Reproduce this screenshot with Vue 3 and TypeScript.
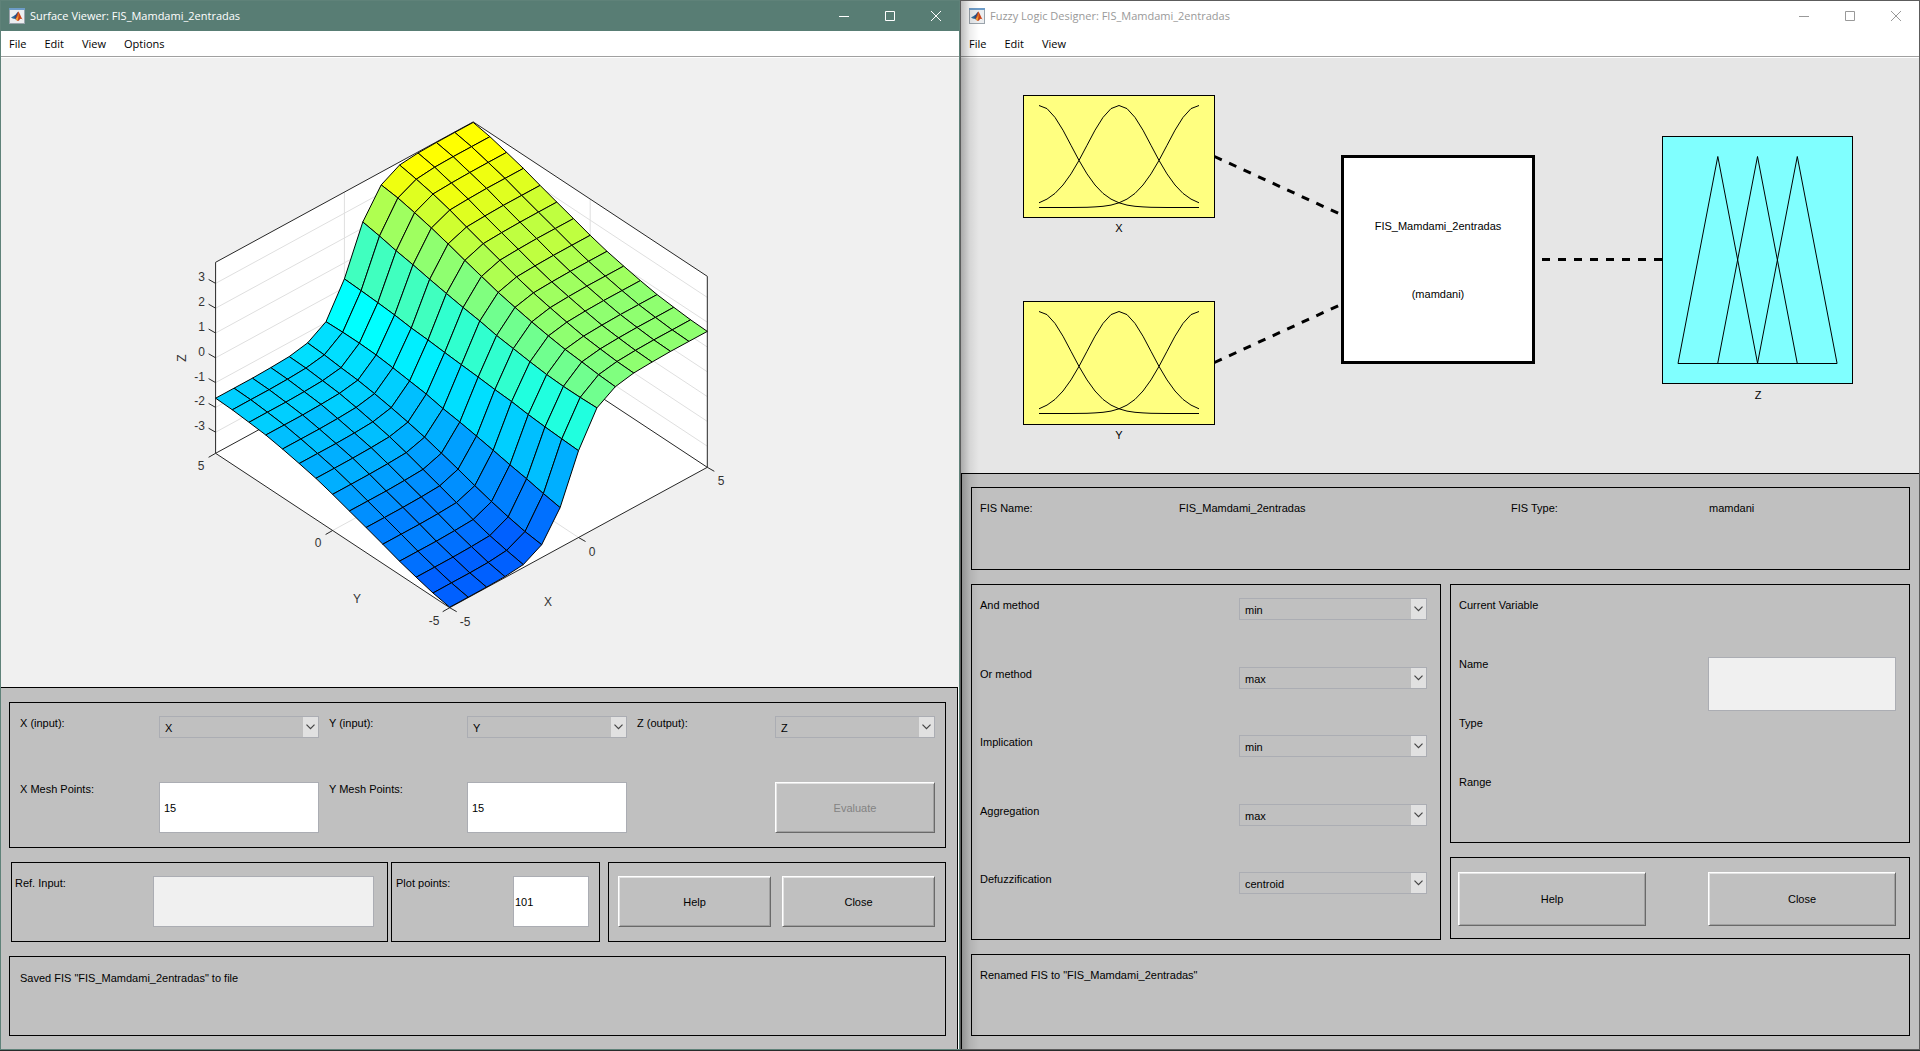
<script setup lang="ts">
import { ref } from 'vue'

type Point = [number, number]

interface Face {
  points: string
  fill: string
}

interface Method {
  id: string
  label: string
  value: string
  options: string[]
}

const fisName = 'FIS_Mamdami_2entradas'

/* ---- Surface plot ---- */

const LAST = 14
const Z_MAX = 3.85

// Heights for x index 7..14, each listed from y = 5 down to y = -5.
const edge = [3.83, 3.7, 3.51, 3.31, 3.07, 2.84, 2.62, 2.39, 2.19, 2.04, 1.9, 1.78, 1.71, 1.65, 1.63]
const heights: Record<number, number[]> = {
  7: [0.35, 0.32, 0.28, 0.23, 0.15, 0.11, 0.05, 0, -0.05, -0.11, -0.15, -0.23, -0.28, -0.32, -0.35],
  8: [2.24, 2.12, 1.97, 1.85, 1.71, 1.58, 1.46, 1.36, 1.22, 1.14, 1.05, 0.98, 0.95, 0.95, 0.97],
  9: [3.33, 3.25, 3.1, 2.93, 2.73, 2.51, 2.31, 2.11, 1.95, 1.81, 1.69, 1.59, 1.53, 1.46, 1.42],
  10: edge.map((z, k) => z - (k < 2 ? 0.1 : 0.06)),
  11: edge.map((z) => z - 0.02),
  12: edge,
  13: edge,
  14: edge,
}

// The rule base is odd about the origin, so the low-x half is the mirrored high-x half.
function height(i: number, k: number): number {
  return i >= 7 ? heights[i][k] : -heights[LAST - i][LAST - k]
}

// i runs along X from -5 to 5, k runs along Y from 5 to -5.
function project(i: number, k: number, z: number): Point {
  return [215.6 + 18.4 * i + 16.72 * k, 357.8 - 10.03 * i + 11.03 * k - 24.8 * z]
}

function path(points: Point[]): string {
  return points.map((p) => p.map((v) => v.toFixed(1)).join(',')).join(' ')
}

function faceColor(z: number): string {
  const t = Math.round((z + 0.9) * 0.22 * 16) / 16
  if (t < 0) return `rgb(0,${Math.round(255 * (1 + t))},255)`
  const r = Math.min(255, Math.round(255 * t))
  return `rgb(${r},255,${255 - r})`
}

const faces: Face[] = []
for (let i = LAST - 1; i >= 0; i--) {
  for (let k = 0; k < LAST; k++) {
    faces.push({
      points: path([
        project(i, k, height(i, k)),
        project(i + 1, k, height(i + 1, k)),
        project(i + 1, k + 1, height(i + 1, k + 1)),
        project(i, k + 1, height(i, k + 1)),
      ]),
      fill: faceColor(height(i, k + 1)),
    })
  }
}

const corner = (i: number, k: number, z: number): Point => project(i * LAST, k * LAST, z * Z_MAX)

const hull = path([
  corner(0, 0, 1), corner(1, 0, 1), corner(1, 1, 1),
  corner(1, 1, -1), corner(0, 1, -1), corner(0, 0, -1),
])

const zTicks = [3, 2, 1, 0, -1, -2, -3]
const gridLines = [
  ...zTicks.map((z) => path([project(0, 0, z), project(LAST, 0, z), project(LAST, LAST, z)])),
  path([project(7, 0, Z_MAX), project(7, 0, -Z_MAX), project(7, LAST, -Z_MAX)]),
  path([project(LAST, 7, Z_MAX), project(LAST, 7, -Z_MAX), project(0, 7, -Z_MAX)]),
]
const backEdges = path([corner(0, 0, -1), corner(1, 0, -1), corner(1, 1, -1)])

function tick(from: Point, dx: number, dy: number): string {
  return path([from, [from[0] + dx, from[1] + dy]])
}
const tickLines = [
  ...zTicks.map((z) => tick(project(0, 0, z), -7, -4)),
  ...[0, 7, 14].map((k) => tick(project(0, k, -Z_MAX), -7, 4)),
  ...[0, 7, 14].map((i) => tick(project(i, LAST, -Z_MAX), 7, 4)),
]

const plotLabels = [
  ...zTicks.map((z) => ({ text: String(z), x: 205, y: Math.round(project(0, 0, z)[1]) - 2, anchor: 'end' })),
  { text: '5', x: 201, y: 470, anchor: 'middle' },
  { text: '0', x: 318, y: 547, anchor: 'middle' },
  { text: '-5', x: 434, y: 625, anchor: 'middle' },
  { text: '-5', x: 465, y: 626, anchor: 'middle' },
  { text: '0', x: 592, y: 556, anchor: 'middle' },
  { text: '5', x: 721, y: 485, anchor: 'middle' },
  { text: 'Y', x: 357, y: 603, anchor: 'middle' },
  { text: 'X', x: 548, y: 606, anchor: 'middle' },
]

/* ---- System diagram ---- */

function bell(center: number, top: number): string {
  const points: Point[] = []
  for (let n = 0; n <= 20; n++) {
    const d = n / 20 - center
    points.push([1039 + 8 * n, top + 112 - 102 * Math.exp(-12.35 * d * d)])
  }
  return path(points)
}

const inputs = [
  { name: 'X', top: 95.5, height: 122 },
  { name: 'Y', top: 301.5, height: 123 },
].map((box) => ({ ...box, curves: [0, 0.5, 1].map((c) => bell(c, box.top)) }))

const triangles = [1678, 1717.7, 1757.5].map((x) => `${x},363.5 ${x + 39.8},156.5 ${x + 79.6},363.5`)

/* ---- Form state ---- */

const xInput = ref('X')
const yInput = ref('Y')
const zOutput = ref('Z')
const xMesh = ref('15')
const yMesh = ref('15')
const refInput = ref('')
const plotPoints = ref('101')
const variableName = ref('')

const methods = ref<Method[]>([
  { id: 'and', label: 'And method', value: 'min', options: ['min', 'prod'] },
  { id: 'or', label: 'Or method', value: 'max', options: ['max', 'probor'] },
  { id: 'imp', label: 'Implication', value: 'min', options: ['min', 'prod'] },
  { id: 'agg', label: 'Aggregation', value: 'max', options: ['max', 'sum'] },
  { id: 'defuzz', label: 'Defuzzification', value: 'centroid', options: ['centroid', 'bisector'] },
])

const captions = ['Minimize', 'Maximize', 'Close']
const captionPaths = ['M0 5.5H10', 'M.5 .5H9.5V9.5H.5Z', 'M0 0L10 10M10 0L0 10']
</script>

<template>
  <div class="desktop">
    <svg class="defs" aria-hidden="true">
      <symbol id="app-icon" viewBox="0 0 16 16">
        <rect x=".5" y=".5" width="15" height="15" fill="#eceef0" stroke="#9aa3ab" />
        <rect width="16" height="2" fill="#6d9cc8" />
        <path d="M2 9.5L5.5 7.6L7.4 8.2L6 10.6L4.3 10.8Z" fill="#2f6f9f" />
        <path d="M5.5 7.6C7 7 8 4.5 9.2 3.6L9.4 8L7 11.6L5.4 10.8Z" fill="#274f86" />
        <path d="M9.2 3.6C10.6 4.5 11.6 9 13.8 11.6C12.2 10.4 11.2 10.6 10.2 12.2C9.4 13.2 8.6 13.2 8 12.6L6.6 10.6Z" fill="#c8431b" />
        <path d="M9.2 3.6C9.4 7 8.8 9.4 6.6 10.8L8.2 13C9.6 11 9.8 7 9.2 3.6Z" fill="#f2a13a" />
      </symbol>
      <symbol id="chevron" viewBox="0 0 9 6">
        <path d="M.5 .7L4.5 4.7L8.5 .7" fill="none" stroke="#444" stroke-width="1.2" />
      </symbol>
    </svg>

    <section class="window active">
      <header class="titlebar">
        <svg class="app-icon"><use href="#app-icon" /></svg>
        <h1>Surface Viewer: {{ fisName }}</h1>
        <button v-for="(name, n) in captions" :key="name" class="caption" :aria-label="name">
          <svg viewBox="0 0 10 10"><path :d="captionPaths[n]" /></svg>
        </button>
      </header>
      <nav class="menubar">
        <button v-for="item in ['File', 'Edit', 'View', 'Options']" :key="item">{{ item }}</button>
      </nav>

      <svg class="figure light" viewBox="1 58 958 629">
        <polygon :points="hull" fill="#fff" />
        <polyline v-for="line in gridLines" :key="line" :points="line" class="grid-line" />
        <polyline :points="backEdges" class="axis" />
        <polygon :points="hull" class="axis" />
        <polyline v-for="line in tickLines" :key="line" :points="line" class="axis" />
        <polygon v-for="face in faces" :key="face.points" :points="face.points" :fill="face.fill" class="face" />
        <text v-for="(label, n) in plotLabels" :key="n" :x="label.x" :y="label.y" :text-anchor="label.anchor" class="tick-label">{{ label.text }}</text>
        <text transform="translate(186 358) rotate(-90)" text-anchor="middle" class="tick-label">Z</text>
      </svg>

      <div class="controls surface-controls">
        <div class="box mesh">
          <label for="x-input">X (input):</label>
          <span class="combo">
            <select id="x-input" v-model="xInput"><option>X</option><option>Y</option></select>
            <svg><use href="#chevron" x="3" y="7" width="9" height="6" /></svg>
          </span>
          <label for="y-input" class="col-4">Y (input):</label>
          <span class="combo">
            <select id="y-input" v-model="yInput"><option>X</option><option>Y</option></select>
            <svg><use href="#chevron" x="3" y="7" width="9" height="6" /></svg>
          </span>
          <label for="z-output" class="col-7">Z (output):</label>
          <span class="combo">
            <select id="z-output" v-model="zOutput"><option>Z</option></select>
            <svg><use href="#chevron" x="3" y="7" width="9" height="6" /></svg>
          </span>
          <label for="x-mesh">X Mesh Points:</label>
          <input id="x-mesh" v-model="xMesh" type="text">
          <label for="y-mesh" class="col-4">Y Mesh Points:</label>
          <input id="y-mesh" v-model="yMesh" type="text">
          <button class="push col-8" disabled>Evaluate</button>
        </div>

        <div class="lower-row">
          <div class="box ref-box">
            <label for="ref-input">Ref. Input:</label>
            <input id="ref-input" v-model="refInput" type="text" disabled>
          </div>
          <div class="box points-box">
            <label for="plot-points">Plot points:</label>
            <input id="plot-points" v-model="plotPoints" type="text">
          </div>
          <div class="box buttons-box">
            <button class="push">Help</button>
            <button class="push">Close</button>
          </div>
        </div>

        <p class="box status">Saved FIS "{{ fisName }}" to file</p>
      </div>
    </section>

    <section class="window inactive">
      <header class="titlebar">
        <svg class="app-icon"><use href="#app-icon" /></svg>
        <h1>Fuzzy Logic Designer: {{ fisName }}</h1>
        <button v-for="(name, n) in captions" :key="name" class="caption" :aria-label="name">
          <svg viewBox="0 0 10 10"><path :d="captionPaths[n]" /></svg>
        </button>
      </header>
      <nav class="menubar">
        <button v-for="item in ['File', 'Edit', 'View']" :key="item">{{ item }}</button>
      </nav>

      <svg class="figure" viewBox="961 58 958 415">
        <g v-for="box in inputs" :key="box.name">
          <rect x="1023.5" :y="box.top" width="191" :height="box.height" fill="#ffff80" stroke="#000" />
          <polyline v-for="curve in box.curves" :key="curve" :points="curve" class="curve" />
          <text x="1119" :y="box.top + box.height + 14" class="node-label">{{ box.name }}</text>
        </g>
        <path d="M1214.5 156.5L1342 215M1214.5 362.5L1342 304M1542 259.5H1662" class="link" />
        <rect x="1342.5" y="156.5" width="191" height="206" fill="#fff" stroke="#000" stroke-width="3" />
        <text x="1438" y="230" class="node-label">{{ fisName }}</text>
        <text x="1438" y="298" class="node-label">(mamdani)</text>
        <rect x="1662.5" y="136.5" width="190" height="247" fill="#80ffff" stroke="#000" />
        <polyline v-for="t in triangles" :key="t" :points="t" class="curve" />
        <path d="M1678 363.5H1837" class="curve" />
        <text x="1758" y="399" class="node-label">Z</text>
      </svg>

      <div class="controls designer-controls">
        <dl class="box fis-info">
          <dt>FIS Name:</dt>
          <dd>{{ fisName }}</dd>
          <dt>FIS Type:</dt>
          <dd>mamdani</dd>
        </dl>
        <div class="columns">
          <div class="box methods">
            <div v-for="m in methods" :key="m.id" class="method">
              <label :for="m.id">{{ m.label }}</label>
              <span class="combo">
                <select :id="m.id" v-model="m.value"><option v-for="o in m.options" :key="o">{{ o }}</option></select>
                <svg><use href="#chevron" x="3" y="7" width="9" height="6" /></svg>
              </span>
            </div>
          </div>
          <div class="side">
            <div class="box variable">
              <h2>Current Variable</h2>
              <div class="variable-row">
                <label for="variable-name">Name</label>
                <input id="variable-name" v-model="variableName" type="text" disabled>
              </div>
              <div class="variable-row">Type</div>
              <div class="variable-row">Range</div>
            </div>
            <div class="box side-buttons">
              <button class="push">Help</button>
              <button class="push">Close</button>
            </div>
          </div>
        </div>
        <p class="box status">Renamed FIS to "{{ fisName }}"</p>
      </div>
    </section>
  </div>
</template>

<style>
body {
  margin: 0;
  background: #262c2b;
}
</style>

<style scoped>
* {
  box-sizing: border-box;
}

.desktop {
  display: grid;
  grid-template-columns: 1fr 1fr;
  min-height: 100vh;
  padding-bottom: 1px;
  color: #000;
  font: 11px/14px "Liberation Sans", Arial, sans-serif;
}

.defs {
  position: absolute;
  width: 0;
  height: 0;
}

.window {
  position: relative;
  display: flex;
  flex-direction: column;
  min-width: 0;
  border: 1px solid #5f8279;
  background: #fff;
}

.inactive {
  border-color: #5c5c5c;
}

.inactive::after {
  content: "";
  position: absolute;
  inset: 0 auto 0 0;
  width: 18px;
  background: linear-gradient(90deg, rgba(0, 0, 0, 0.26), rgba(0, 0, 0, 0.07) 50%, transparent);
  pointer-events: none;
}

.titlebar {
  display: flex;
  align-items: center;
  height: 30px;
  padding-left: 8px;
  color: #999;
}

.active .titlebar {
  background: #587d74;
  color: #fff;
}

.app-icon {
  width: 16px;
  height: 16px;
}

.titlebar h1 {
  flex: 1;
  margin: 0 0 0 5px;
  font: 11px/16px "Open Sans", "Noto Sans", sans-serif;
}

.caption {
  width: 46px;
  height: 30px;
  padding: 0;
  border: 0;
  background: none;
  color: inherit;
}

.caption svg {
  display: block;
  width: 10px;
  height: 10px;
  margin: 0 auto;
  fill: none;
  stroke: currentColor;
}

.menubar {
  display: flex;
  gap: 2px;
  height: 27px;
  border-bottom: 1px solid #fff;
  box-shadow: inset 0 -1px #a0a0a0;
}

.menubar button {
  height: 25px;
  padding: 0 8px;
  border: 0;
  background: none;
  color: #000;
  font: 11px/16px "Open Sans", "Noto Sans", sans-serif;
}

.figure {
  display: block;
  width: 100%;
  height: auto;
  background: #e6e6e6;
}

.figure.light {
  background: #f0f0f0;
}

.grid-line {
  fill: none;
  stroke: #dfdfdf;
}

.axis {
  fill: none;
  stroke: #262626;
}

.face {
  stroke: #000;
  stroke-linejoin: round;
}

.tick-label {
  fill: #333;
  font-size: 12px;
}

.curve {
  fill: none;
  stroke: #000;
}

.link {
  fill: none;
  stroke: #000;
  stroke-width: 3;
  stroke-dasharray: 8 8;
}

.node-label {
  text-anchor: middle;
}

.controls {
  display: flex;
  flex: 1;
  flex-direction: column;
  gap: 14px;
  border-top: 1px solid #000;
  background: #c0c0c0;
}

.surface-controls {
  margin-right: 1px;
  padding: 14px 11px 13px 8px;
  border-right: 1px solid #000;
}

.designer-controls {
  padding: 13px 9px 13px 9px;
  border-left: 1px solid #000;
}

.box {
  min-width: 0;
  margin: 0;
  border: 1px solid #000;
}

.mesh {
  display: grid;
  grid-template-columns: 139fr 160fr 10fr 138fr 160fr 10fr 138fr 160fr;
  row-gap: 44px;
  padding: 13px 10px 14px;
}

.col-4 {
  grid-column: 4;
}

.col-7 {
  grid-column: 7;
}

.col-8 {
  grid-column: 8;
}

.combo {
  position: relative;
  display: block;
  height: 22px;
}

.combo svg {
  position: absolute;
  top: 1px;
  right: 1px;
  width: 15px;
  height: 20px;
  background: #e1e1e1;
  pointer-events: none;
}

select {
  display: block;
  width: 100%;
  height: 22px;
  margin: 0;
  padding: 2px 16px 0 5px;
  border: 1px solid #abadb3;
  border-radius: 0;
  appearance: none;
  background: #c0c0c0;
  color: #000;
  font: inherit;
}

input {
  width: 100%;
  min-width: 0;
  height: 51px;
  margin: 0;
  padding: 1px 4px 0;
  border: 1px solid #abadb3;
  border-radius: 0;
  background: #fff;
  color: #000;
  font: inherit;
}

input:disabled {
  background: #f0f0f0;
}

.push {
  height: 51px;
  padding: 0;
  border: 1px solid;
  border-color: #fff #696969 #696969 #fff;
  border-radius: 0;
  background: #c0c0c0;
  box-shadow: inset 1px 1px #e3e3e3, inset -1px -1px #a0a0a0;
  color: #000;
  font: inherit;
}

.push:disabled {
  color: #838383;
}

.lower-row {
  display: grid;
  grid-template-columns: 380fr 217fr 338fr;
  padding-left: 2px;
}

.lower-row .box {
  display: grid;
  min-height: 80px;
  padding-top: 13px;
}

.lower-row .ref-box {
  grid-template-columns: 138fr 221fr;
  margin-right: 3px;
  padding-right: 13px;
  padding-left: 3px;
}

.lower-row .points-box {
  grid-template-columns: 117fr 76fr;
  margin-right: 8px;
  padding-right: 10px;
  padding-left: 4px;
}

.points-box input {
  padding-left: 1px;
}

.lower-row .buttons-box {
  grid-template-columns: 1fr 1fr;
  gap: 11px;
  padding-right: 10px;
  padding-left: 9px;
}

.surface-controls .status {
  flex: 1;
  min-height: 80px;
  padding: 14px 10px;
}

.fis-info {
  display: grid;
  grid-template-columns: 199fr 332fr 198fr 200fr;
  min-height: 83px;
  padding: 13px 0 0 8px;
}

.fis-info dd {
  margin: 0;
}

.columns {
  display: grid;
  grid-template-columns: 470fr 460fr;
  column-gap: 9px;
}

.methods {
  display: flex;
  flex-direction: column;
  justify-content: space-between;
  min-height: 356px;
  padding: 13px 13px 45px 8px;
}

.method {
  display: grid;
  grid-template-columns: 259fr 188fr;
}

.side {
  display: flex;
  flex-direction: column;
  gap: 14px;
}

.variable {
  min-height: 259px;
  padding: 13px 13px 0 8px;
}

.variable h2 {
  margin: 0 0 45px;
  font: inherit;
}

.variable-row {
  display: grid;
  grid-template-columns: 249fr 188fr;
  min-height: 59px;
}

.variable input {
  height: 54px;
}

.side-buttons {
  display: flex;
  gap: 62px;
  min-height: 82px;
  padding: 14px 13px 0 7px;
}

.side-buttons .push {
  flex: 1;
  height: 54px;
}

.designer-controls .status {
  flex: 1;
  min-height: 81px;
  padding: 13px 8px;
}
</style>
